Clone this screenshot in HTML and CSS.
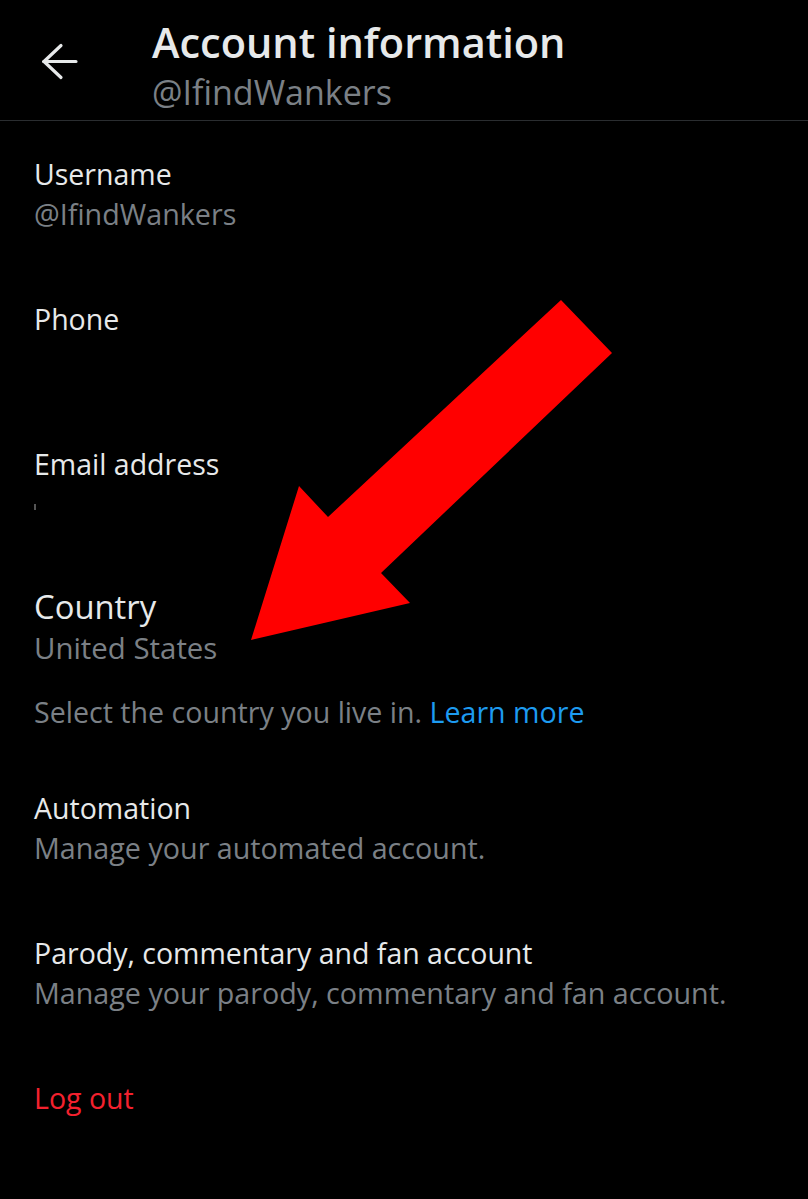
FILE: index.html
```html
<!DOCTYPE html>
<html lang="en">
<head>
<meta charset="utf-8">
<title>Account information</title>
<link rel="stylesheet" href="styles.css">
</head>
<body>
<div class="page">
  <header class="topbar">
    <svg class="back" width="40" height="40" viewBox="0 0 40 40" aria-hidden="true">
      <path d="M38 20.5H5.5 M23 4.5L6 20.5L23 36.5" fill="none" stroke="#e7e9ea" stroke-width="3.2" stroke-linecap="round" stroke-linejoin="round"/>
    </svg>
    <div class="titles">
      <div class="title">Account information</div>
      <div class="subtitle">@IfindWankers</div>
    </div>
  </header>

  <main class="list">
    <section class="item">
      <div class="label">Username</div>
      <div class="value">@IfindWankers</div>
    </section>
    <section class="item">
      <div class="label">Phone</div>
      <div class="value"></div>
    </section>
    <section class="item">
      <div class="label">Email address</div>
      <div class="value"><span class="redacted"></span></div>
    </section>
    <section class="item country">
      <div class="label">Country</div>
      <div class="value">United States</div>
      <div class="note">Select the country you live in. <span class="link">Learn more</span></div>
    </section>
    <section class="item">
      <div class="label">Automation</div>
      <div class="value">Manage your automated account.</div>
    </section>
    <section class="item">
      <div class="label">Parody, commentary and fan account</div>
      <div class="value">Manage your parody, commentary and fan account.</div>
    </section>
    <section class="item logout">
      <div class="label danger">Log out</div>
    </section>
  </main>

  <svg class="pointer" width="808" height="1199" viewBox="0 0 808 1199" aria-hidden="true">
    <polygon points="561,300 612,353 381,573 410,603 251,640 299,486 328,517" fill="#ff0000"/>
  </svg>
</div>
</body>
</html>
```

FILE: styles.css
```css
html, body {
  margin: 0;
  padding: 0;
  background: #000;
}

body {
  font-family: "Open Sans", "Noto Sans", "DejaVu Sans", sans-serif;
  color: #e7e9ea;
}

.page {
  position: relative;
  width: 808px;
  height: 1199px;
  overflow: hidden;
  background: #000;
}

.topbar {
  display: flex;
  align-items: flex-start;
  padding: 17px 0 8px 38px;
  height: 95px;
  border-bottom: 1px solid #2a2d30;
}

.back {
  flex: none;
  margin-top: 24px;
}

.titles {
  margin-left: 74px;
  display: flex;
  flex-direction: column;
  gap: 5px;
}

.title {
  font-size: 41.5px;
  font-weight: 600;
  line-height: 50px;
  color: #e7e9ea;
}

.subtitle {
  font-size: 34px;
  line-height: 40px;
  color: #7b8086;
}

.list {
  padding: 34px 0 0 34px;
}

.item {
  padding-bottom: 67px;
}

.label {
  font-size: 28.5px;
  line-height: 39px;
  color: #e7e9ea;
}

.value {
  font-size: 28.7px;
  line-height: 39px;
  min-height: 39px;
  color: #7b8086;
}

.redacted {
  display: inline-block;
  width: 2px;
  height: 6px;
  background: #555;
  vertical-align: middle;
}

.country {
  margin-top: -4px;
  padding-bottom: 58px;
}

.country .label {
  font-size: 32.8px;
  line-height: 42px;
}

.country .value {
  font-size: 29.4px;
  line-height: 40px;
  min-height: 40px;
}

.note {
  margin-top: 24px;
  font-size: 28.6px;
  line-height: 39px;
  color: #7b8086;
}

.link {
  color: #1d9bf0;
}

.danger {
  color: #f4212e;
}

.pointer {
  position: absolute;
  left: 0;
  top: 0;
}
```
